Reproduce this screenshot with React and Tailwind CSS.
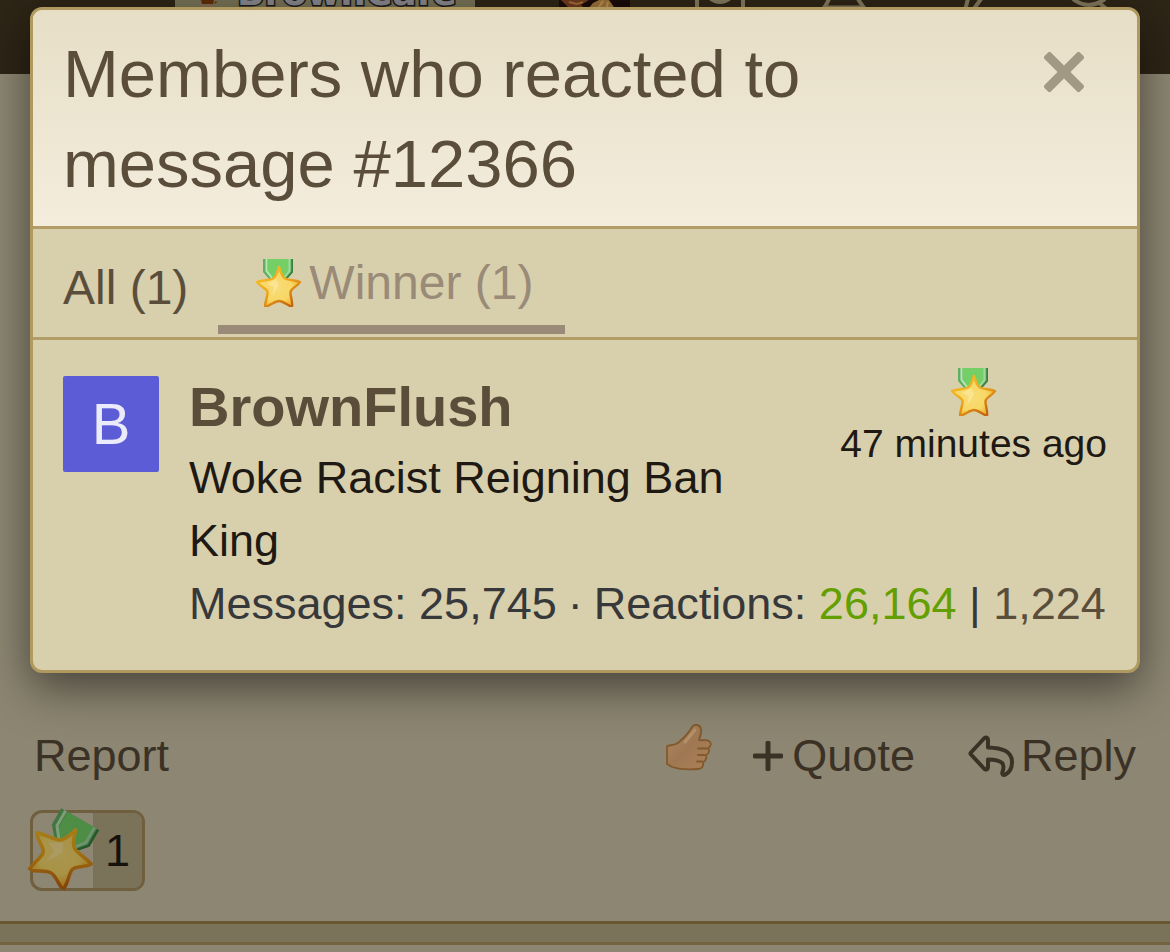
import React from 'react';

const Medal = ({ className }) => (
    <svg viewBox="0 0 48 48" className={className} role="img" aria-label="Winner">
        <defs>
            <radialGradient id="star-fill" cx="45%" cy="50%" r="55%">
                <stop offset="0%" stopColor="#f8dc78" />
                <stop offset="65%" stopColor="#f7d765" />
                <stop offset="100%" stopColor="#f0b02c" />
            </radialGradient>
            <linearGradient id="star-edge" x1="0" y1="0" x2="0.7" y2="1">
                <stop offset="0%" stopColor="#f7c52e" />
                <stop offset="55%" stopColor="#eda51a" />
                <stop offset="100%" stopColor="#c4650f" />
            </linearGradient>
        </defs>
        <path d="M8 0H38V13L31 21H15L8 13Z" fill="#5fae62" />
        <path d="M13 0H34V14L28 19H18L13 14Z" fill="#73cf66" />
        <path d="M11.500 0V12L17 19" fill="none" stroke="#b9e8b4" strokeWidth="2" />
        <path d="M34.500 0V12L29 19" fill="none" stroke="#a3d9a0" strokeWidth="2" />
        <path d="M37.200 0V13L31 20" fill="none" stroke="#37803f" strokeWidth="1.600" />
        <path
            d="M24 8C26 14 27 18 30 19.500C34 21.500 40 21 45 23C42 28 36 29 35.500 33C35 37 38 42 37 48C32 46 28 42 24 42C20 42 16 46 10 48C10 42 13 37 12.500 33C12 29 5 28 2 23C8 21 14 21.500 18 19.500C21 18 22 14 24 8Z"
            fill="url(#star-fill)"
            stroke="url(#star-edge)"
            strokeWidth="2.400"
            strokeLinejoin="round"
        />
        <path d="M21 20L12 25L19 28L17 38L24 26Z" fill="#fff3c0" opacity="0.4" />
    </svg>
);

const ThumbIcon = () => (
    <svg viewBox="0 0 46 48" className="mb-4 h-12 w-[46px]" aria-hidden="true">
        <defs>
            <linearGradient id="thumb-fill" x1="0" y1="0" x2="1" y2="1">
                <stop offset="0%" stopColor="#ab8a63" />
                <stop offset="50%" stopColor="#9f7853" />
                <stop offset="100%" stopColor="#aa8358" />
            </linearGradient>
        </defs>
        <path
            d="M1 22C5 21 9 21 12 19C18 14 22 10 26 3C28 0 34 0 35 5C36 9 34 12 33 16C37 17 40 15 43 17C46 19 45 23 42 24C44 26 43 30 40 31C41 33 40 37 37 38C38 42 36 45 32 45C22 46 12 45 6 43L1 40Z"
            fill="url(#thumb-fill)"
            stroke="#83592c"
            strokeWidth="1.800"
            strokeLinejoin="round"
        />
        <path d="M32 24.500H41M32 31H39M31 37.500H36" stroke="#83592c" strokeWidth="1.800" strokeLinecap="round" />
        <path d="M29 6L19 18" stroke="#b3916a" strokeWidth="3" strokeLinecap="round" />
    </svg>
);

const PlusIcon = () => (
    <svg viewBox="0 0 30 30" className="size-[30px]" aria-hidden="true">
        <path d="M15 2V28M2 15H28" stroke="#3b3225" strokeWidth="5" strokeLinecap="round" />
    </svg>
);

const ReplyIcon = () => (
    <svg viewBox="0 0 46 42" className="h-[42px] w-[46px]" aria-hidden="true">
        <path
            d="M3 17.500L16 3.500C18 1.500 20 2.500 20 5V12.500C34 13 44 16 44 27C44 33 41 37.500 37.500 39.500C35.500 40.500 33.500 39.500 34.500 37C37.500 28 34 25 20 24.500V32C20 34.500 18 35.500 16 33.500L3 19.500C2 18.500 2 18.500 3 17.500Z"
            fill="none"
            stroke="#3b3225"
            strokeWidth="4"
            strokeLinejoin="round"
        />
    </svg>
);

const CloseIcon = () => (
    <svg viewBox="0 0 42 42" className="size-[42px]" fill="#a19983" aria-hidden="true">
        <rect x="-4" y="16.500" width="50" height="9" rx="2" transform="rotate(45 21 21)" />
        <rect x="-4" y="16.500" width="50" height="9" rx="2" transform="rotate(-45 21 21)" />
    </svg>
);

const SiteHeader = () => (
    <header className="flex h-[74px] items-start overflow-hidden bg-[#2d2516]">
        <a href="#home" className="ml-[175px] flex h-[74px] w-[300px] shrink-0 bg-[#757055]">
            <svg viewBox="0 0 20 8" className="ml-6 h-2 w-5" aria-hidden="true">
                <path d="M2 0H15L14 4H3Z" fill="#5e2c08" />
                <path d="M16 1L19 2L15 4Z" fill="#6f3a10" />
                <path d="M4 4V7M10 4V7" stroke="#8a6653" strokeWidth="3" />
            </svg>
            <span className="-mt-7 ml-[18px] font-['DejaVu_Sans'] text-[36px] leading-[42px] font-bold text-[#85858a] [paint-order:stroke] [-webkit-text-stroke:3px_#1c1b19]">
                BrownCafe
            </span>
        </a>
        <svg viewBox="0 0 71 10" className="ml-[84px] h-[10px] w-[71px] shrink-0" aria-hidden="true">
            <path d="M0 0H71V10H0Z" fill="#1a0b08" />
            <path d="M2 0H30L22 5L28 10H12L6 4Z" fill="#6f3a1c" />
            <path d="M10 2L18 4L24 2" fill="none" stroke="#a06a3c" strokeWidth="2" />
            <path d="M28 10L34 3L40 0H50L57 10Z" fill="#9a7039" />
            <path d="M38 10L44 1M47 10L49 2" stroke="#b89150" strokeWidth="2" />
        </svg>
        <svg
            viewBox="0 0 420 10"
            className="ml-16 h-[10px] w-[420px] shrink-0"
            fill="none"
            stroke="#82775b"
            strokeWidth="4"
            aria-hidden="true"
        >
            <path d="M3 0V10M49 0V10" />
            <path d="M15 0Q26 8 37 0Z" fill="#82775b" stroke="none" />
            <path d="M135 -1Q133 4 129 9M164 -1Q167 4 171 9" />
            <path d="M132 7H168" strokeWidth="3" />
            <path d="M274 -1L271 10M287 -1L279 10" />
            <path d="M379 -1Q394 11 411 -1M404 2L414 10" />
        </svg>
    </header>
);

const ReactionsModal = () => (
    <section
        role="dialog"
        aria-labelledby="reactions-title"
        className="absolute inset-x-[30px] top-[7px] overflow-hidden rounded-xl border-[3px] border-[#af995f] bg-[#d8cfad] shadow-[0_15px_45px_rgba(0,0,0,0.5)]"
    >
        <div className="flex items-start justify-between border-b-[3px] border-[#b29d66] bg-linear-to-b from-[#e6dec5] to-[#f4eddd] px-[30px] pt-[19px] pb-[17px]">
            <h1 id="reactions-title" className="max-w-[860px] text-[67px] leading-[90px] text-[#5a4e3b]">
                Members who reacted to message #12366
            </h1>
            <button type="button" aria-label="Close" className="mt-[22px] mr-[22px]">
                <CloseIcon />
            </button>
        </div>

        <div role="tablist" className="flex h-[111px] border-b-[3px] border-[#b29d66] text-[48px] leading-[96px]">
            <button type="button" role="tab" aria-selected="false" className="px-[30px] pt-[10px] text-[#5a4e3b]">
                All (1)
            </button>
            <button
                type="button"
                role="tab"
                aria-selected="true"
                className="mb-[3px] flex items-center gap-[6px] border-b-[9px] border-[#998b77] pt-3 pr-8 pl-[37px] text-[#998b77]"
            >
                <Medal className="size-12" />
                Winner (1)
            </button>
        </div>

        <div className="flex gap-[30px] px-[30px] pt-7 pb-[35px]">
            <a
                href="#member"
                className="mt-2 flex size-24 shrink-0 items-center justify-center rounded-xs bg-[#5c5cd6] text-[58px] leading-none text-[#ebebfa]"
            >
                B
            </a>
            <div className="min-w-0 flex-1 text-[45px] leading-[63px]">
                <div className="flex items-start justify-between gap-[30px]">
                    <div>
                        <h3 className="text-[56px] leading-[78px] font-bold text-[#5a4e3b]">
                            <a href="#member">BrownFlush</a>
                        </h3>
                        <p className="text-[#1e1912]">Woke Racist Reigning Ban King</p>
                    </div>
                    <div className="flex shrink-0 flex-col items-center text-[39px] leading-[56px] text-[#1e1912]">
                        <Medal className="size-12" />
                        <time>47 minutes ago</time>
                    </div>
                </div>
                <p className="whitespace-nowrap text-[#37383a]">
                    Messages: 25,745
                    <span className="mx-[11px]">·</span>
                    Reactions: <span className="text-[#639f00]">26,164</span> |{' '}
                    <span className="text-[#5a4e3b]">1,224</span>
                </p>
            </div>
        </div>
    </section>
);

const App = () => {
    return (
        <div className="relative flex min-h-screen flex-col overflow-hidden bg-[#8d8672] font-['Liberation_Sans',Arial,sans-serif]">
            <SiteHeader />

            <main className="flex flex-1 flex-col justify-end">
                <div className="flex h-[63px] items-center px-[34px] text-[45px] leading-[63px] text-[#3b3225]">
                    <a href="#report">Report</a>
                    <div className="ml-auto flex items-center">
                        <button type="button" aria-label="Like" className="mr-[41px]">
                            <ThumbIcon />
                        </button>
                        <a href="#quote" className="mr-[53px] flex items-center gap-[9px]">
                            <PlusIcon />
                            Quote
                        </a>
                        <a href="#reply" className="flex items-center gap-[7px]">
                            <ReplyIcon />
                            Reply
                        </a>
                    </div>
                </div>

                <button
                    type="button"
                    className="relative mt-[23px] mb-[30px] ml-[30px] flex h-[81px] w-[115px] rounded-xl border-[3px] border-[#6f5f3e] text-[45px] leading-[76px] text-[#15110b]"
                >
                    <span className="w-[60px]">
                        <Medal className="absolute top-[2px] -left-1 size-[70px] rotate-30 brightness-[0.68]" />
                    </span>
                    <span className="flex-1 rounded-r-lg bg-[#7b725a]">1</span>
                </button>

                <div className="h-6 border-y-[3px] border-t-[#69582f] border-b-[#73643f] bg-[#7b725a]" />
                <div className="h-[7px]" />
            </main>

            <ReactionsModal />
        </div>
    );
};

export default App;
